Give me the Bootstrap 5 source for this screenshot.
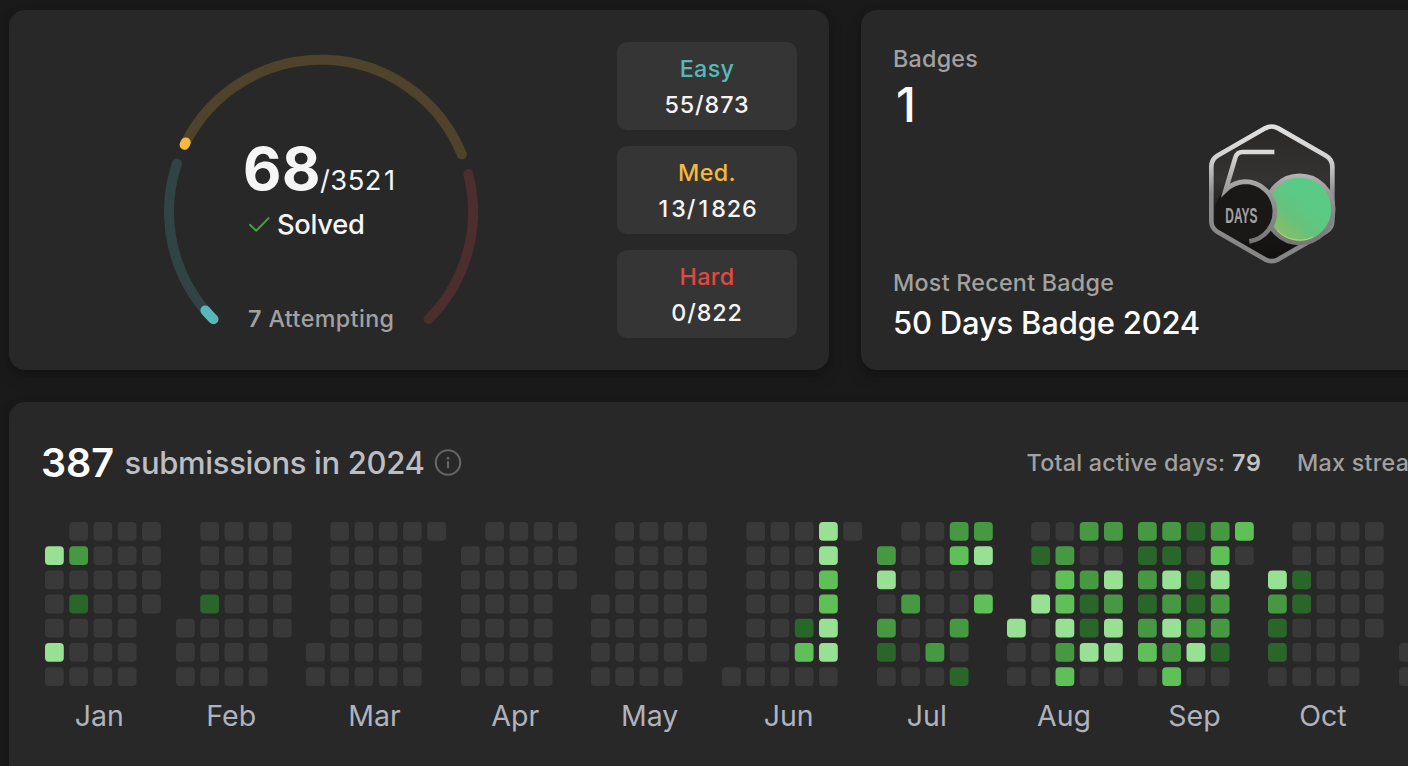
<!DOCTYPE html>
<html lang="en">
<head>
<meta charset="utf-8">
<title>Profile statistics</title>
<link href="https://cdn.jsdelivr.net/npm/bootstrap@5.3.0/dist/css/bootstrap.min.css" rel="stylesheet">
<style>
  body { background: #1a1a1a; color: #f5f5f5; font-family: Inter, "Liberation Sans", sans-serif; font-size: 23.3px; line-height: 32px; letter-spacing: .35px; height: 766px; white-space: nowrap; }
  .page { width: 1681px; padding: 10px 0 0 9px; gap: 32px; }
  .top-row { gap: 32px; }
  .panel { background: #282828; border-radius: 16px; box-shadow: 0 8px 16px rgba(0,0,0,.16), 0 2px 6px rgba(0,0,0,.14); }
  .stats { height: 360px; width: 820px; padding: 32px; }
  .muted { color: #a1a1a1; font-weight: 450; letter-spacing: .25px; }
  .gauge { width: 314px; height: 280px; margin: 12px 0 0 123px; }
  .total { left: 79px; top: 80px; height: 60px; }
  .total b { font-size: 59.5px; font-weight: 700; line-height: 68px; letter-spacing: .5px; font-feature-settings: "tnum"; }
  .total .all { font-size: 27.3px; letter-spacing: .5px; margin-left: -1px; }
  .one { padding: 0 2.2px; }
  .solved { left: 84px; top: 155px; font-size: 27.3px; gap: 7px; letter-spacing: -.3px; font-weight: 500; }
  .trying { left: 84px; top: 249px; letter-spacing: .4px; }
  .level { width: 180px; height: 88px; padding: 9px 0 7px; background: #353535; border-radius: 10px; line-height: 36px; font-weight: 500; }
  .easy { color: #58b8b9; } .med { color: #f6b83e; } .hard { color: #e04a42; }
  .nums { letter-spacing: .9px; }
  .badges { padding-top: 1px; }
  .big { font-size: 48px; line-height: 60px; font-weight: 500; color: #fff; padding-left: 3px; }
  .latest { margin-bottom: -9px; }
  .recent { font-size: 31px; line-height: 48px; font-weight: 500; letter-spacing: -.2px; color: #fff; }
  .award { left: 329px; top: 100px; }
  .calendar { height: 460px; padding: 32px; }
  .headline { height: 57px; }
  .count { font-size: 39.5px; font-weight: 600; letter-spacing: -.1px; color: #fff; width: 75px; }
  .caption { font-size: 31px; color: #bdbec4; font-weight: 450; letter-spacing: -.32px; margin-left: 8.5px; width: 299px; }
  .info { margin-left: 10px; }
  .days { margin-left: 565px; width: 236px; } .streak { margin-left: 34.5px; }
  .figure-sm { color: #c3c3c6; letter-spacing: 1px; }
  .months { margin: 31px 0 0 4px; }
  .months text { font-size: 28.5px; fill: #afb3bd; letter-spacing: 0; }
  .l0 { fill: #393939; } .l1 { fill: #2a652a; } .l2 { fill: #469842; } .l3 { fill: #60c058; } .l4 { fill: #98e194; }
</style>
</head>
<body class="overflow-hidden">
<main class="page d-flex flex-column">
  <div class="top-row d-flex">
    <section class="panel stats d-flex justify-content-between">
      <div class="gauge position-relative">
        <svg width="314" height="280" viewBox="164 54 314 280" fill="none" stroke-width="10" stroke-linecap="round">
          <path stroke="#304543" d="M213.5 319.2A152 152 0 0 1 176.9 163.6"/>
          <path stroke="#4f432c" d="M184.6 144.8A152 152 0 0 1 461.8 154.3"/>
          <path stroke="#4c2e2c" d="M468.3 174A152 152 0 0 1 428.5 319.2"/>
          <path stroke="#58b8b9" d="M213.5 319.2A152 152 0 0 1 205.4 310.4"/>
          <path stroke="#f6b83e" d="M184.6 144.8A152 152 0 0 1 185.7 142.4"/>
        </svg>
        <div class="total position-absolute d-flex align-items-baseline"><b>68</b><span class="all">/352<span class="one">1</span></span></div>
        <div class="solved position-absolute d-flex align-items-center">
          <svg width="22" height="18" viewBox="0 0 22 18" fill="none" stroke="#46a03c" stroke-width="2" stroke-linecap="round" stroke-linejoin="round"><path d="M2 8.8l6.2 6L20.6 2.1"/></svg>
          <span>Solved</span>
        </div>
        <div class="trying muted position-absolute"><span class="fw-semibold">7</span> Attempting</div>
      </div>
      <div class="d-flex flex-column gap-3 text-center">
        <div class="level"><div class="easy">Easy</div><div class="nums">55/873</div></div>
        <div class="level"><div class="med">Med.</div><div class="nums"><span class="one">1</span>3/<span class="one">1</span>826</div></div>
        <div class="level"><div class="hard">Hard</div><div class="nums">0/822</div></div>
      </div>
    </section>
    <section class="panel stats position-relative d-flex flex-column justify-content-between">
      <div class="badges"><div class="muted">Badges</div><div class="big">1</div></div>
      <svg class="award position-absolute" width="160" height="170" viewBox="0 0 480 510" fill="none">
        <defs>
          <linearGradient id="rim" x1="0" y1="40" x2="0" y2="462" gradientUnits="userSpaceOnUse"><stop offset="0" stop-color="#e2e2e2"/><stop offset=".25" stop-color="#d2d2d2"/><stop offset=".5" stop-color="#8d8d8d"/><stop offset="1" stop-color="#858585"/></linearGradient>
          <linearGradient id="face" x1="0" y1="50" x2="0" y2="450" gradientUnits="userSpaceOnUse"><stop offset="0" stop-color="#2b2928"/><stop offset=".4" stop-color="#353332"/><stop offset=".7" stop-color="#1b1918"/><stop offset="1" stop-color="#12100f"/></linearGradient>
          <linearGradient id="coin" x1="265" y1="365" x2="345" y2="270" gradientUnits="userSpaceOnUse"><stop offset="0" stop-color="#88bd67"/><stop offset=".5" stop-color="#65c27c"/><stop offset="1" stop-color="#5bca85"/></linearGradient>
          <linearGradient id="ring" x1="0" y1="120" x2="0" y2="400" gradientUnits="userSpaceOnUse"><stop offset="0" stop-color="#dedede"/><stop offset=".35" stop-color="#a5a5a5"/><stop offset=".6" stop-color="#8c8c8c"/><stop offset="1" stop-color="#777"/></linearGradient>
        </defs>
        <path fill="url(#face)" d="M225 55Q245 44 265 55L408 137Q427 148 427 170V332Q427 354 408 365L265 448Q245 459 225 448L82 365Q64 354 64 332V170Q64 148 82 137Z"/>
        <circle cx="165" cy="305" r="90" fill="#1a1717"/>
        <path stroke="url(#rim)" stroke-width="14" d="M225 55Q245 44 265 55L408 137Q427 148 427 170V332Q427 354 408 365L265 448Q245 459 225 448L82 365Q64 354 64 332V170Q64 148 82 137Z"/>
        <circle cx="329" cy="298" r="101" fill="url(#coin)" stroke="url(#ring)" stroke-width="13"/>
        <path stroke="#a6dd82" stroke-width="3" d="M262 361A92 92 0 0 0 370 381"/>
        <path fill="#1a1717" d="M165 215A90 90 0 0 1 178 394Z"/>
        <path stroke="url(#ring)" stroke-width="14" d="M253 126H158Q141 126 136 143L107 240A90 90 0 0 1 165 215A90 90 0 0 1 178 394"/>
        <text x="106" y="338" font-family="Liberation Sans" font-size="64" font-weight="700" letter-spacing="0" fill="#a1a1a1" textLength="96" lengthAdjust="spacingAndGlyphs">DAYS</text>
      </svg>
      <div class="latest"><div class="muted">Most Recent Badge</div><div class="recent">50 Days Badge 2024</div></div>
    </section>
  </div>
  <section class="panel calendar">
    <div class="headline d-flex align-items-center">
      <span class="count">387</span><span class="caption">submissions in 2024</span>
      <svg class="info" width="28" height="28" viewBox="0 0 28 28" fill="none"><circle cx="14" cy="13.5" r="12.2" stroke="#666" stroke-width="2.1"/><path stroke="#666" stroke-width="2.2" stroke-linecap="round" d="M14 13v5.3"/><circle cx="14" cy="9.2" r="1.4" fill="#666"/></svg>
      <div class="days muted">Total active days: <span class="figure-sm fw-semibold">79</span></div>
      <div class="streak muted">Max streak:</div>
    </div>
    <div class="months d-flex" id="months"></div>
  </section>
</main>
<script>
  // One string per week, Sunday first: "." is outside the month, 0-4 is the activity level.
  const full = '0000000';
  const year = [
    ['Jan', 54.2, ['.400040', '0201000', full, full, '0000...']],
    ['Feb', 55.2, ['....000', '0001000', full, full, '00000..']],
    ['Mar', 68.5, ['.....00', full, full, full, full, '0......']],
    ['Apr', 54.2, ['.000000', full, full, full, '000....']],
    ['May', 58.7, ['...0000', full, full, full, '000000.']],
    ['Jun', 66.7, ['......0', full, full, '0000130', '4433440', '0......']],
    ['Jul', 49.8, ['.240210', '0002000', '0000020', '2300201', '2403...']],
    ['Aug', 57, ['....400', '0104000', '0233423', '2021140', '2042440']],
    ['Sep', 56.5, ['2121230', '2142423', '1011240', '2342210', '30.....']],
    ['Oct', 55, ['..42110', '0011000', full, full, '00000..']],
    ['', 56, ['.....00', full, full, full, full]]
  ];
  const step = 24.25, rowStep = 24.2, size = 18.8;
  document.getElementById('months').innerHTML = year.map(([name, mid, weeks]) => {
    const cells = weeks.map((w, x) => [...w].map((l, y) => l === '.' ? '' :
      `<rect class="l${l}" x="${(x * step).toFixed(2)}" y="${(y * rowStep).toFixed(2)}" width="${size}" height="${size}" rx="4"/>`).join('')).join('');
    const width = weeks.length * step + 9.25;
    return `<svg class="flex-shrink-0 overflow-visible" width="${width}" height="212">${cells}<text x="${mid}" y="204" text-anchor="middle">${name}</text></svg>`;
  }).join('');
</script>
<script src="https://cdn.jsdelivr.net/npm/bootstrap@5.3.0/dist/js/bootstrap.bundle.min.js"></script>
</body>
</html>
